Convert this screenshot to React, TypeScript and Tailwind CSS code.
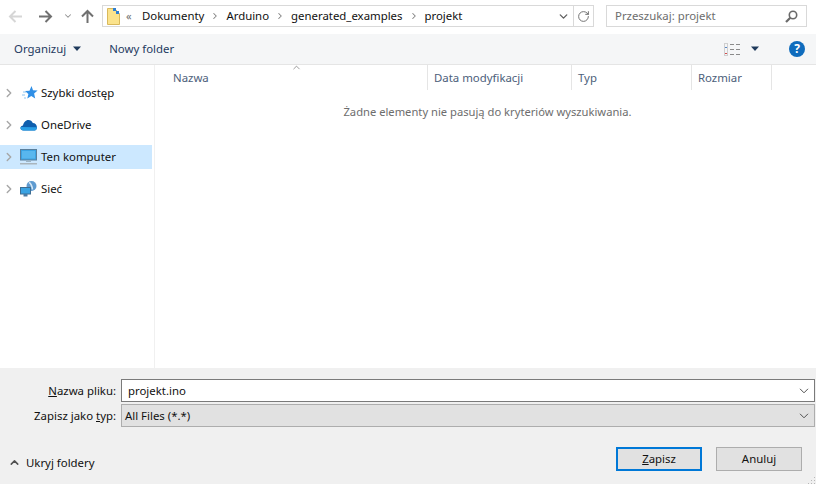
import React from 'react';
import { ChevronDown, ChevronRight, ChevronUp, RotateCw } from 'lucide-react';

const font = { fontFamily: '"Noto Sans", "Open Sans", sans-serif' };

const Caret = () => (
  <svg width="10" height="6" viewBox="0 0 10 6" className="shrink-0">
    <path d="M1 0.5h8L5 5z" fill="#1f3a5c" />
  </svg>
);

const NavArrow = ({ dir, color }: { dir: 'left' | 'right' | 'up'; color: string }) => {
  const rotate = dir === 'left' ? 'rotate-180' : dir === 'up' ? '-rotate-90' : '';
  return (
    <svg width="15" height="15" viewBox="0 0 15 15" className={`shrink-0 ${rotate}`}>
      <path d="M1 7.500h12M7.500 2l5.500 5.500L7.500 13" fill="none" stroke={color} strokeWidth="2" />
    </svg>
  );
};

const Magnifier = () => (
  <svg width="13" height="13" viewBox="0 0 13 13" className="ml-auto shrink-0">
    <circle cx="8" cy="5" r="3.700" fill="none" stroke="#6a6a6a" strokeWidth="1.600" />
    <path d="M5.300 7.700L1 12" stroke="#6a6a6a" strokeWidth="2.200" />
  </svg>
);

const SelectChevron = () => (
  <svg width="10" height="6" viewBox="0 0 10 6" className="ml-auto shrink-0">
    <path d="M1 .8l4 4 4-4" fill="none" stroke="#505050" strokeWidth="1" />
  </svg>
);

const Star = () => (
  <svg width="18" height="16" viewBox="0 0 18 16">
    <path d="M11.500 1l1.500 4.300 4.600.3-3.500 3 1.100 4.900-3.900-2.600-4 2.600 1.100-4.500-3.500-3 4.600-.3z" fill="#2f8fe6" />
    <path d="M3 7h3M2 10h3M4 13h2" stroke="#8cc4f0" strokeWidth="1" />
  </svg>
);

const Cloud = () => (
  <svg width="17" height="12" viewBox="0 0 17 12">
    <path d="M3.500 11.500C1.500 11.500.5 10.300.5 9c0-1.500 1.200-2.500 2.500-2.500C3.500 3.500 5.500 1 8.500 1c2 0 3.500 1.200 4.300 3 2.300 0 4.200 2 4.200 4.500 0 1.500-1 3-2.500 3z" fill="#0f5fae" />
    <path d="M3.500 11.500C1.500 11.500.5 10.300.5 9c0-.4.1-.8.3-1.100L16.800 8.200c.3 1.700-.8 3.300-2.300 3.300z" fill="#2a9fe6" />
  </svg>
);

const Monitor = () => (
  <svg width="17" height="16" viewBox="0 0 17 16">
    <rect x="0.500" y="0.500" width="16" height="10.500" fill="#3aa3e3" stroke="#5a7f9c" />
    <rect x="2" y="2" width="13" height="7.500" fill="#58b7ee" />
    <rect x="6" y="11.500" width="5" height="1.500" fill="#9db4c4" />
    <rect x="0" y="14" width="17" height="1.500" fill="#a9b5bd" />
  </svg>
);

const Network = () => (
  <svg width="17" height="16" viewBox="0 0 17 16">
    <circle cx="11.500" cy="5" r="5" fill="#5f9bd0" />
    <path d="M9 1.500c2 1 3 3 3.500 7" stroke="#d7e8f5" strokeWidth="1.500" fill="none" />
    <rect x="0.500" y="6.500" width="10" height="6.500" fill="#3aa3e3" stroke="#3d6d93" />
    <rect x="3.500" y="13" width="4" height="2.500" fill="#4a7ba3" />
  </svg>
);

const FolderDoc = () => (
  <svg width="13" height="17" viewBox="0 0 13 17">
    <path d="M.5.500h7l5 5v11H.5z" fill="#fbe38c" stroke="#d9b95c" />
    <rect x="6" y="0" width="3" height="3" fill="#2f7fd0" />
    <rect x="9" y="3" width="3" height="3" fill="#2f7fd0" />
  </svg>
);

const ViewIcon = () => (
  <svg width="17" height="13" viewBox="0 0 17 13">
    <rect x="0.500" y="0.500" width="3" height="12" fill="none" stroke="#a9a9a9" strokeDasharray="1 1" />
    <rect x="1" y="4" width="2" height="1" fill="#5a87c5" />
    <rect x="1" y="10" width="2" height="1" fill="#d24b4b" />
    <path d="M6 1.500h4M12 1.500h4M6 6.500h4M12 6.500h4M6 11.500h4M12 11.500h4" stroke="#8a8a8a" />
  </svg>
);

const Grip = () => (
  <svg width="8" height="8" viewBox="0 0 8 8" className="absolute right-0 bottom-0">
    <path d="M6 1h1v1H6zM3 4h1v1H3zM6 4h1v1H6zM0 7h1v1H0zM3 7h1v1H3zM6 7h1v1H6z" fill="#b8b8b8" />
  </svg>
);

const Sep = () => <ChevronRight size={10} strokeWidth={2.500} className="mx-[6px] text-[#808080] shrink-0" />;

const navItems = [
  { label: 'Szybki dostęp', icon: <Star /> },
  { label: 'OneDrive', icon: <Cloud /> },
  { label: 'Ten komputer', icon: <Monitor />, active: true },
  { label: 'Sieć', icon: <Network /> },
];

const columns = [
  { label: 'Nazwa', width: 'w-[273px] pl-[18px]' },
  { label: 'Data modyfikacji', width: 'w-[144px] pl-[6px]' },
  { label: 'Typ', width: 'w-[120px] pl-[6px]' },
  { label: 'Rozmiar', width: 'w-[80px] pl-[6px]' },
];

export default function App() {
  return (
    <div className="relative w-[816px] h-[484px] flex flex-col overflow-hidden bg-white text-[11.4px] text-[#111111]" style={font}>
      {/* address bar */}
      <div className="h-[34px] flex items-start pt-[5px] shrink-0">
        <div className="w-[102px] h-[22px] flex items-center pl-[8px] shrink-0">
          <NavArrow dir="left" color="#d6d6d6" />
          <span className="ml-[15px] flex"><NavArrow dir="right" color="#707070" /></span>
          <ChevronDown size={10} strokeWidth={2.500} className="text-[#909090] ml-[10px]" />
          <span className="ml-[7px] flex"><NavArrow dir="up" color="#707070" /></span>
        </div>
        <div className="w-[492px] h-[22px] border border-[#d9d9d9] flex items-center shrink-0">
          <div className="ml-[4px] mr-[6px] flex"><FolderDoc /></div>
          <span className="text-[#707070] mr-[8px] w-[8px] text-[11px]">«</span>
          <span className="whitespace-nowrap">Dokumenty</span>
          <Sep />
          <span className="whitespace-nowrap">Arduino</span>
          <Sep />
          <span className="whitespace-nowrap">generated_examples</span>
          <Sep />
          <span className="whitespace-nowrap">projekt</span>
          <div className="ml-auto w-[20px] flex justify-center">
            <ChevronDown size={13} strokeWidth={2.500} className="text-[#606060]" />
          </div>
          <div className="w-[20px] h-full border-l border-[#d9d9d9] flex items-center justify-center">
            <RotateCw size={13} strokeWidth={1.800} className="text-[#707070]" />
          </div>
        </div>
        <div className="ml-[12px] w-[201px] h-[22px] border border-[#d9d9d9] flex items-center pl-[8px] pr-[8px] text-[#6d6d6d]">
          <span>Przeszukaj: projekt</span>
          <Magnifier />
        </div>
      </div>

      {/* toolbar */}
      <div className="h-[31px] bg-[#f5f6f7] border-b border-[#e5e5e5] flex items-center shrink-0 pl-[14px] pr-[11px] text-[#1e3a5f]">
        <span>Organizuj</span>
        <span className="ml-[6px] flex"><Caret /></span>
        <span className="ml-[27px]">Nowy folder</span>
        <span className="ml-auto flex"><ViewIcon /></span>
        <span className="ml-[9px] flex"><Caret /></span>
        <span className="ml-[29px] w-[16px] h-[16px] rounded-full bg-[#0f6cbd] text-white font-bold text-[12px] flex items-center justify-center">?</span>
      </div>

      {/* body */}
      <div className="flex-1 flex min-h-0">
        <div className="w-[155px] shrink-0 border-r border-[#f0f0f0] pt-[16px] flex flex-col">
          {navItems.map((item) => (
            <div key={item.label} className={`h-[24px] mb-[8px] flex items-center pl-[2px] w-[152px] ${item.active ? 'bg-[#cce8ff]' : ''}`}>
              <ChevronRight size={14} strokeWidth={2.400} className="text-[#a6a6a6] shrink-0" />
              <span className="w-[25px] flex justify-center shrink-0">{item.icon}</span>
              <span className="whitespace-nowrap">{item.label}</span>
            </div>
          ))}
        </div>
        <div className="flex-1 flex flex-col min-w-0">
          <div className="relative h-[25px] flex text-[#4c607a]">
            {columns.map((col) => (
              <div key={col.label} className={`${col.width} h-full border-r border-[#e5e5e5] flex items-center whitespace-nowrap`}>{col.label}</div>
            ))}
            <ChevronUp size={11} strokeWidth={1.500} className="absolute left-[136px] top-[-3px] text-[#707070]" />
          </div>
          <div className="pt-[14px] text-center text-[#6d6d6d] pl-[4px] text-[11.2px]">Żadne elementy nie pasują do kryteriów wyszukiwania.</div>
        </div>
      </div>

      {/* bottom panel */}
      <div className="relative h-[116px] shrink-0 bg-[#f0f0f0] flex flex-col pt-[11px] pr-[1px]">
        <div className="flex items-center h-[23px]">
          <span className="w-[116px] text-right mr-[5px]"><span className="underline">N</span>azwa pliku:</span>
          <div className="flex-1 h-[23px] bg-white border border-[#7a7a7a] flex items-center pl-[6px] pr-[5px]">
            <span>projekt.ino</span>
            <SelectChevron />
          </div>
        </div>
        <div className="flex items-center h-[23px] mt-[2px]">
          <span className="w-[116px] text-right mr-[5px]">Zapisz jako <span className="underline">t</span>yp:</span>
          <div className="flex-1 h-[23px] bg-[#e1e1e1] border border-[#adadad] flex items-center pl-[3px] pr-[5px]">
            <span>All Files (*.*)</span>
            <SelectChevron />
          </div>
        </div>
        <div className="flex items-start mt-[20px] pl-[8px] pr-[13px]">
          <div className="flex items-center mt-[7px]">
            <ChevronUp size={13} strokeWidth={2.800} className="text-[#505050]" />
            <span className="ml-[5px]">Ukryj foldery</span>
          </div>
          <div className="ml-auto w-[86px] h-[24px] bg-[#e1e1e1] border-2 border-[#0078d7] flex items-center justify-center"><span><span className="underline">Z</span>apisz</span></div>
          <div className="ml-[14px] w-[86px] h-[24px] bg-[#e1e1e1] border border-[#adadad] flex items-center justify-center">Anuluj</div>
        </div>
        <Grip />
      </div>
    </div>
  );
}
